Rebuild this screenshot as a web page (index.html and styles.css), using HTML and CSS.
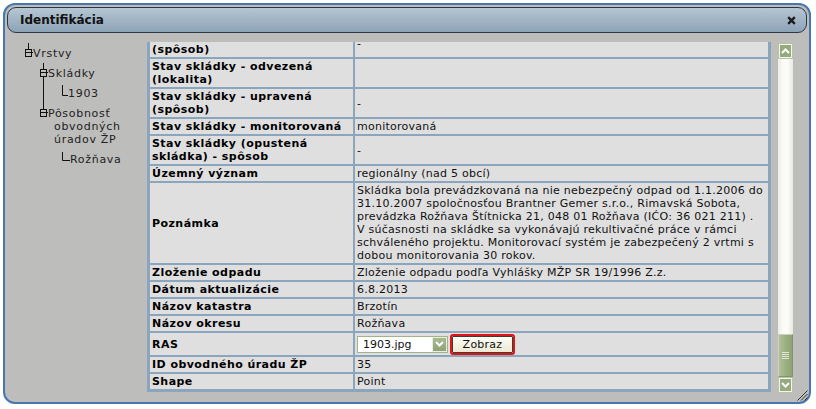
FILE: index.html
```html
<!DOCTYPE html>
<html lang="sk">
<head>
  <meta charset="UTF-8">
  <title>Identifikácia</title>
  <link rel="stylesheet" href="styles.css">
</head>
<body>
  <div class="window">
    <div class="title-bar">
      <span class="title">Identifikácia</span>
      <a href="#" class="close-btn" title="Zavrieť">
        <svg width="9" height="9" viewBox="0 0 9 9"><path d="M1.2 1.2L7.8 7.8M7.8 1.2L1.2 7.8" stroke="#1b1b1b" stroke-width="2.4"/></svg>
      </a>
    </div>

    <div class="window-body">
      <!-- strom vrstiev -->
      <div class="tree">
        <div class="node root">
          <svg class="tree-icon" width="8" height="20"><path d="M3.5 3V9.5M7 12.5H8" stroke="#111"/><rect x="0.5" y="9.5" width="6" height="7" fill="none" stroke="#111"/><path d="M0.5 12.5H6.5" stroke="#111"/></svg>
          <span class="node-label">Vrstvy</span>
        </div>
        <div class="node lvl1">
          <svg class="tree-icon" width="8" height="20"><path d="M3.5 3V9.5M3.5 16.5V20M7 12.5H8" stroke="#111"/><rect x="0.5" y="9.5" width="6" height="7" fill="none" stroke="#111"/><path d="M0.5 12.5H6.5" stroke="#111"/></svg>
          <span class="node-label">Skládky</span>
        </div>
        <div class="node lvl1">
          <svg class="tree-icon" width="28" height="20"><path d="M3.5 0V20M22.5 5V15.5H28" stroke="#111" fill="none"/></svg>
          <span class="node-label">1903</span>
        </div>
        <div class="node lvl1">
          <svg class="tree-icon" width="8" height="20"><path d="M3.5 0V9.5M7 12.5H8" stroke="#111"/><rect x="0.5" y="9.5" width="6" height="7" fill="none" stroke="#111"/><path d="M0.5 12.5H6.5" stroke="#111"/></svg>
          <span class="node-label wrap">Pôsobnosť obvodných úradov ŽP</span>
        </div>
        <div class="node lvl1">
          <svg class="tree-icon" width="30" height="20"><path d="M22.5 6V14.5H30" stroke="#111" fill="none"/></svg>
          <span class="node-label">Rožňava</span>
        </div>
      </div>

      <!-- atributy -->
      <div class="info-view">
        <table class="info-table">
          <colgroup><col class="col-name"><col class="col-value"></colgroup>
          <tr><th>Stav skládky - uzavretá (spôsob)</th><td>-</td></tr>
          <tr><th>Stav skládky - odvezená (lokalita)</th><td></td></tr>
          <tr><th>Stav skládky - upravená (spôsob)</th><td>-</td></tr>
          <tr><th>Stav skládky - monitorovaná</th><td>monitorovaná</td></tr>
          <tr><th>Stav skládky (opustená skládka) - spôsob</th><td>-</td></tr>
          <tr><th>Územný význam</th><td>regionálny (nad 5 obcí)</td></tr>
          <tr><th>Poznámka</th><td>Skládka bola prevádzkovaná na nie nebezpečný odpad od 1.1.2006 do 31.10.2007 spoločnosťou Brantner Gemer s.r.o., Rimavská Sobota,<br>prevádzka Rožňava Štítnicka 21, 048 01 Rožňava (IĆO: 36 021 211) .<br>V súčasnosti na skládke sa vykonávajú rekultivačné práce v rámci schváleného projektu. Monitorovací systém je zabezpečený 2 vrtmi s dobou monitorovania 30 rokov.</td></tr>
          <tr><th>Zloženie odpadu</th><td>Zloženie odpadu podľa Vyhlášky MŽP SR 19/1996 Z.z.</td></tr>
          <tr><th>Dátum aktualizácie</th><td>6.8.2013</td></tr>
          <tr><th>Názov katastra</th><td>Brzotín</td></tr>
          <tr><th>Názov okresu</th><td>Rožňava</td></tr>
          <tr>
            <th>RAS</th>
            <td>
              <div class="ras-field">
                <span class="select-wrap">
                  <select class="ras-select"><option>1903.jpg</option></select>
                  <span class="select-arrow"><svg width="9" height="6" viewBox="0 0 9 6"><path d="M1 1L4.5 4.5L8 1" stroke="#fff" stroke-width="2" fill="none"/></svg></span>
                </span>
                <button class="zobraz-btn">Zobraz</button>
              </div>
            </td>
          </tr>
          <tr><th>ID obvodného úradu ŽP</th><td>35</td></tr>
          <tr><th>Shape</th><td>Point</td></tr>
        </table>
      </div>

      <div class="scrollbar">
        <div class="scroll-btn"><svg width="9" height="6" viewBox="0 0 9 6"><path d="M1 5L4.5 1.5L8 5" stroke="#fff" stroke-width="2" fill="none"/></svg></div>
        <div class="scroll-track">
          <div class="scroll-thumb"><svg width="7" height="9"><path d="M0 1.5H7M0 3.5H7M0 5.5H7M0 7.5H7" stroke="#dfe7cf"/></svg></div>
        </div>
        <div class="scroll-btn"><svg width="9" height="6" viewBox="0 0 9 6"><path d="M1 1L4.5 4.5L8 1" stroke="#fff" stroke-width="2" fill="none"/></svg></div>
      </div>
    </div>

    <div class="resize-grip">
      <svg width="12" height="12"><path d="M11.5 1.5L1.5 11.5M11.5 5L5 11.5M11.5 8.5L8.5 11.5" stroke="#333"/></svg>
    </div>
  </div>
</body>
</html>
```

FILE: styles.css
```css
/* Reset */
* {
  margin: 0;
  padding: 0;
  box-sizing: border-box;
}

body {
  background: #fff;
  font-family: "DejaVu Sans", Verdana, sans-serif;
  font-size: 11px;
  color: #111;
}

/* Okno */
.window {
  position: relative;
  width: 808px;
  height: 401px;
  margin: 3px 0 0 3px;
  border: 2px solid #4777b0;
  border-radius: 12px;
  background: #bdbdbb;
}

.title-bar {
  display: flex;
  align-items: center;
  justify-content: space-between;
  height: 26px;
  margin: 2px 2px 0;
  padding: 0 10px 0 12px;
  border: 1px solid #2c3846;
  border-radius: 9px;
  background: linear-gradient(#b6c6d3, #8ca3b7);
}

.title {
  font-size: 12px;
  font-weight: bold;
  color: #111;
}

.close-btn svg { display: block; }

.window-body {
  display: flex;
  align-items: flex-start;
}

/* Strom */
.tree {
  width: 142px;
  padding-top: 7px;
  color: #222;
  letter-spacing: 0.7px;
}

.node {
  display: flex;
  align-items: flex-start;
}

.node.root { padding-left: 20px; }
.node.lvl1 { padding-left: 35px; }

.tree-icon {
  display: block;
  flex-shrink: 0;
}

.node-label {
  padding-top: 7px;
  line-height: 13px;
}

.node-label.wrap {
  padding-left: 6px;
  text-indent: -6px;
}

/* Tabuľka */
.info-view {
  width: 624px;
  height: 350px;
  margin-top: 9px;
  overflow: hidden;
}

.info-table {
  width: 624px;
  margin-top: -16px;
  table-layout: fixed;
  border: 1px solid #8aa5bc;
  border-spacing: 2px;
  background: #8aa5bc;
}

.col-name { width: 203px; }

.info-table th,
.info-table td {
  padding: 1px 2px;
  line-height: 13px;
  text-align: left;
  vertical-align: middle;
  background: #dfdfdf;
  letter-spacing: 0.25px;
}

.info-table th {
  font-weight: bold;
  color: #000;
  letter-spacing: 0.45px;
}

.ras-field {
  display: flex;
  align-items: center;
  gap: 4px;
  height: 20px;
}

.select-wrap {
  position: relative;
  display: block;
}

.ras-select {
  appearance: none;
  display: block;
  width: 91px;
  height: 17px;
  padding: 0 0 0 5px;
  border: 1px solid #a2b389;
  border-radius: 0;
  background: #fff;
  font-family: inherit;
  font-size: 11px;
  color: #111;
}

.select-arrow {
  position: absolute;
  top: 1px;
  right: 1px;
  width: 15px;
  height: 15px;
  display: flex;
  align-items: center;
  justify-content: center;
  border: 1px solid #e9eee0;
  background: linear-gradient(#a9ba90, #8fa277);
}

.select-arrow svg { display: block; }

.zobraz-btn {
  width: 61px;
  height: 17px;
  border: 1px solid #3d3d31;
  border-radius: 1px;
  outline: 2px solid #e01515;
  background: linear-gradient(#fefef6, #ebe8d4);
  font-family: inherit;
  font-size: 11px;
  letter-spacing: 0.25px;
  color: #111;
  cursor: pointer;
}

/* Posuvník */
.scrollbar {
  display: flex;
  flex-direction: column;
  width: 15px;
  height: 350px;
  margin: 10px 0 0 7px;
  background: linear-gradient(to right, #eeeee6, #fbfbf8 35%, #fbfbf8 65%, #e9e9e1);
}

.scroll-btn {
  display: flex;
  align-items: center;
  justify-content: center;
  height: 16px;
  border: 1px solid #b7c3a5;
  box-shadow: inset 0 0 0 1px #f3f6ee;
  background: #97aa7e;
}

.scroll-btn svg { display: block; }

.scroll-track {
  flex: 1;
  display: flex;
  flex-direction: column;
  justify-content: flex-end;
}

.scroll-thumb {
  display: flex;
  align-items: center;
  justify-content: center;
  height: 43px;
  border: 1px solid #83946b;
  border-top-color: #c9d3b8;
  border-left-color: #c9d3b8;
  background: linear-gradient(to right, #b1be9b, #9db083 50%, #8fa177);
}

.scroll-thumb svg { display: block; }

.resize-grip {
  position: absolute;
  right: 1px;
  bottom: 1px;
}

.resize-grip svg { display: block; }
```
